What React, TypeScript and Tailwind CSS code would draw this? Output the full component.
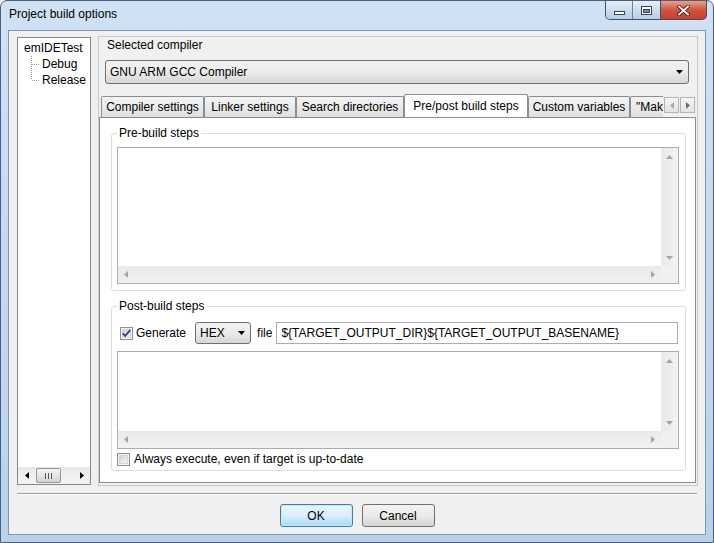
import React from "react";

type Dir = "up" | "down" | "left" | "right";

function Tri({ dir, color = "#000" }: { dir: Dir; color?: string }) {
  if (dir === "up" || dir === "down") {
    return (
      <svg width="7" height="4" viewBox="0 0 7 4" className="block">
        <polygon points={dir === "down" ? "0,0 7,0 3.5,4" : "0,4 7,4 3.5,0"} fill={color} />
      </svg>
    );
  }
  return (
    <svg width="4" height="7" viewBox="0 0 4 7" className="block">
      <polygon points={dir === "right" ? "0,0 0,7 4,3.5" : "4,0 4,7 0,3.5"} fill={color} />
    </svg>
  );
}

function CheckBox({ checked }: { checked?: boolean }) {
  return (
    <svg width="13" height="13" viewBox="0 0 13 13" className="block shrink-0">
      <defs>
        <linearGradient id={checked ? "cbA" : "cbB"} x1="0" y1="0" x2="1" y2="1">
          <stop offset="0" stopColor="#cbcfd5" />
          <stop offset="1" stopColor="#f7f7f7" />
        </linearGradient>
      </defs>
      <rect x="0.5" y="0.5" width="12" height="12" fill="#f4f4f4" stroke="#8e8f8f" />
      <rect x="2.5" y="2.5" width="8" height="8" fill={`url(#${checked ? "cbA" : "cbB"})`} stroke="#d2d4d8" />
      {checked && (
        <path d="M2.8 6.3 L5.2 8.9 L10.2 3.2" fill="none" stroke="#31467d" strokeWidth="1.9" />
      )}
    </svg>
  );
}

function DisabledTextArea({ h }: { h: string }) {
  return (
    <div className={`w-[562px] ${h} border border-[#abadb3] bg-white flex flex-col`}>
      <div className="flex-1 flex">
        <div className="flex-1" />
        <div className="w-[17px] bg-gradient-to-r from-[#e9e9e9] to-[#f2f2f2] flex flex-col items-center justify-between pt-[7px] pb-[6px]">
          <Tri dir="up" color="#a5a5a5" />
          <Tri dir="down" color="#a5a5a5" />
        </div>
      </div>
      <div className="h-[17px] flex">
        <div className="flex-1 bg-gradient-to-b from-[#e9e9e9] to-[#f2f2f2] flex items-center justify-between px-[6px]">
          <Tri dir="left" color="#a5a5a5" />
          <Tri dir="right" color="#a5a5a5" />
        </div>
        <div className="w-[17px] bg-[#f0f0f0]" />
      </div>
    </div>
  );
}

function ComboBox({ w, text }: { w: string; text: string }) {
  return (
    <div
      className={`${w} h-full border border-[#707070] rounded-[3px] bg-gradient-to-b from-[#f2f2f2] via-[#ebebeb] to-[#d6d6d6] flex items-center justify-between pl-[4px] pr-[5px]`}
    >
      <span>{text}</span>
      <Tri dir="down" />
    </div>
  );
}

const tabs: { label: string; w: string; active?: boolean }[] = [
  { label: "Compiler settings", w: "w-[103px]" },
  { label: "Linker settings", w: "w-[92px]" },
  { label: "Search directories", w: "w-[108px]" },
  { label: "Pre/post build steps", w: "w-[124px]", active: true },
  { label: "Custom variables", w: "w-[102px]" },
  { label: "\"Make\" commands", w: "w-[112px]" },
];

function TitleBar() {
  return (
    <div className="h-[29px] flex items-start justify-between pl-[8px] pr-[6px] shrink-0">
      <div className="pt-[6px] text-[12px] leading-[14px] text-black">Project build options</div>
      <div className="flex h-[19px]">
        <div className="flex border-l border-b border-[#3d4e66] rounded-bl-[5px] overflow-hidden">
          <div className="w-[27px] h-full bg-gradient-to-b from-[#e6eff9] via-[#cddcee] to-[#b8cde6] border-r border-[#6f819a] flex items-end justify-center pb-[4px]">
            <svg width="11" height="4" viewBox="0 0 11 4" className="block">
              <rect x="0.5" y="0.5" width="10" height="3" fill="#ffffff" stroke="#344257" />
            </svg>
          </div>
          <div className="w-[27px] h-full bg-gradient-to-b from-[#e6eff9] via-[#cddcee] to-[#b8cde6] flex items-center justify-center">
            <svg width="11" height="9" viewBox="0 0 11 9" className="block">
              <rect x="0.5" y="0.5" width="10" height="8" fill="#ffffff" stroke="#344257" />
              <rect x="2.5" y="3.5" width="6" height="3" fill="#7d8ea6" stroke="#344257" />
            </svg>
          </div>
        </div>
        <div className="w-[47px] h-full border-x border-b border-[#3d4e66] rounded-br-[5px] bg-gradient-to-b from-[#e6a193] via-[#d0533e] to-[#c5402c] flex items-center justify-center">
          <svg width="13" height="11" viewBox="0 0 13 11" className="block">
            <path d="M2 1.5 L11 9.5 M11 1.5 L2 9.5" stroke="#4a1a14" strokeWidth="3.6" strokeLinecap="square" />
            <path d="M2 1.5 L11 9.5 M11 1.5 L2 9.5" stroke="#ffffff" strokeWidth="1.8" strokeLinecap="square" />
          </svg>
        </div>
      </div>
    </div>
  );
}

function Tree() {
  return (
    <div className="w-[74px] h-[448px] mt-[1px] border border-[#828790] bg-white flex flex-col">
      <div className="flex-1 pl-[6px] pt-[2px]">
        <div className="h-[16px] leading-[16px]">emIDETest</div>
        <div className="flex">
          <svg width="18" height="32" viewBox="0 0 18 32" className="block shrink-0">
            <line x1="7.5" y1="0" x2="7.5" y2="24" stroke="#a0a0a0" strokeDasharray="1 1" />
            <line x1="8" y1="8.5" x2="16" y2="8.5" stroke="#a0a0a0" strokeDasharray="1 1" />
            <line x1="8" y1="24.5" x2="16" y2="24.5" stroke="#a0a0a0" strokeDasharray="1 1" />
          </svg>
          <div>
            <div className="h-[16px] leading-[16px]">Debug</div>
            <div className="h-[16px] leading-[16px]">Release</div>
          </div>
        </div>
      </div>
      <div className="h-[17px] flex items-center bg-gradient-to-b from-[#e6e6e6] via-[#f0f0f0] to-[#f3f3f3]">
        <div className="w-[17px] h-full flex items-center justify-center">
          <Tri dir="left" />
        </div>
        <div className="w-[25px] h-[15px] ml-[1px] border border-[#979797] rounded-[2px] bg-gradient-to-b from-[#f4f4f4] via-[#e6e6e6] to-[#d3d3d3] flex items-center justify-center gap-[2px]">
          <div className="w-[1px] h-[6px] bg-[#5a5a5a]" />
          <div className="w-[1px] h-[6px] bg-[#5a5a5a]" />
          <div className="w-[1px] h-[6px] bg-[#5a5a5a]" />
        </div>
        <div className="flex-1" />
        <div className="w-[17px] h-full flex items-center justify-center">
          <Tri dir="right" />
        </div>
      </div>
    </div>
  );
}

function TabControl() {
  return (
    <div className="w-[597px] flex flex-col">
      <div className="h-[23px] flex items-end pl-[2px]">
        <div className="w-[562px] h-[24px] flex items-end overflow-hidden shrink-0">
          {tabs.map((t) =>
            t.active ? (
              <div
                key={t.label}
                className={`${t.w} h-[24px] shrink-0 -mb-[1px] relative z-10 bg-white border-t border-x border-[#898c95] rounded-t-[2px] flex items-center justify-center pb-[1px] whitespace-nowrap`}
              >
                {t.label}
              </div>
            ) : (
              <div
                key={t.label}
                className={`${t.w} h-[21px] shrink-0 bg-gradient-to-b from-[#f3f3f3] via-[#ebebeb] to-[#dedede] border-t border-x border-[#898c95] rounded-t-[2px] flex items-center justify-center whitespace-nowrap`}
              >
                {t.label}
              </div>
            )
          )}
        </div>
        <div className="flex gap-[1px] ml-[1px] self-start mt-[3px]">
          <div className="w-[15px] h-[16px] border border-[#b5b5b5] bg-gradient-to-b from-[#f5f5f5] to-[#e4e4e4] flex items-center justify-center">
            <Tri dir="left" color="#a9a9a9" />
          </div>
          <div className="w-[15px] h-[16px] border border-[#b5b5b5] bg-gradient-to-b from-[#f5f5f5] to-[#e4e4e4] flex items-center justify-center">
            <Tri dir="right" color="#6d6d6d" />
          </div>
        </div>
      </div>
      <div className="h-[366px] border border-[#898c95] bg-white pt-[8px] pl-[11px]">
        <fieldset className="w-[575px] border border-[#d5dfe5] rounded-[3px] pl-[5px] pr-[6px] pt-[7px] pb-[6px]">
          <legend className="px-[2px] leading-[14px]">Pre-build steps</legend>
          <DisabledTextArea h="h-[137px]" />
        </fieldset>
        <fieldset className="w-[575px] mt-[8px] border border-[#d5dfe5] rounded-[3px] pl-[5px] pr-[6px] pt-[9px] pb-[4px]">
          <legend className="px-[2px] leading-[14px]">Post-build steps</legend>
          <div className="h-[22px] flex items-center">
            <div className="ml-[3px]">
              <CheckBox checked />
            </div>
            <span className="ml-[3px]">Generate</span>
            <div className="ml-[9px] h-full">
              <ComboBox w="w-[56px]" text="HEX" />
            </div>
            <span className="ml-[6px]">file</span>
            <div className="ml-[4px] w-[402px] h-full border border-[#abadb3] bg-white flex items-center pl-[4px] whitespace-nowrap">
              {"${TARGET_OUTPUT_DIR}${TARGET_OUTPUT_BASENAME}"}
            </div>
          </div>
          <div className="mt-[7px]">
            <DisabledTextArea h="h-[98px]" />
          </div>
          <div className="mt-[3px] h-[14px] flex items-center">
            <CheckBox />
            <span className="ml-[4px]">Always execute, even if target is up-to-date</span>
          </div>
        </fieldset>
      </div>
    </div>
  );
}

export default function App() {
  return (
    <div className="w-[714px] h-[543px] bg-white font-['Liberation_Sans',Arial,sans-serif] text-[12px] leading-[14px] text-black">
      <div className="w-full h-full rounded-t-[7px] border border-[#4f5f73] bg-gradient-to-b from-[#d0e2f5] via-[#c3d9f0] to-[#b9d1eb] flex flex-col">
        <TitleBar />
        <div className="mx-[7px] mb-[7px] flex-1 border border-[#8396ac] bg-[#f0f0f0] flex flex-col">
          <div className="flex items-start pt-[5px] pl-[8px] gap-[7px]">
            <Tree />
            <div className="w-[600px] h-[450px] border border-[#c9c9c9] flex flex-col">
              <div className="pl-[8px] pt-[1px] leading-[14px]">Selected compiler</div>
              <div className="ml-[6px] mt-[8px] h-[24px]">
                <ComboBox w="w-[584px]" text="GNU ARM GCC Compiler" />
              </div>
              <div className="mt-[10px]">
                <TabControl />
              </div>
            </div>
          </div>
          <div className="mx-[8px] mt-[7px] h-[2px] border-t border-[#a0a0a0] border-b border-b-white" />
          <div className="mt-[9px] flex justify-center gap-[9px]">
            <div className="w-[73px] h-[23px] border border-[#3c7fb1] rounded-[3px] bg-gradient-to-b from-[#eaf6fd] via-[#d9f0fc] to-[#a7d9f5] shadow-[inset_0_0_0_1px_#c5e8fb] flex items-center justify-center">
              OK
            </div>
            <div className="w-[73px] h-[23px] border border-[#707070] rounded-[3px] bg-gradient-to-b from-[#f2f2f2] via-[#ebebeb] to-[#d4d4d4] flex items-center justify-center">
              Cancel
            </div>
          </div>
        </div>
      </div>
    </div>
  );
}
